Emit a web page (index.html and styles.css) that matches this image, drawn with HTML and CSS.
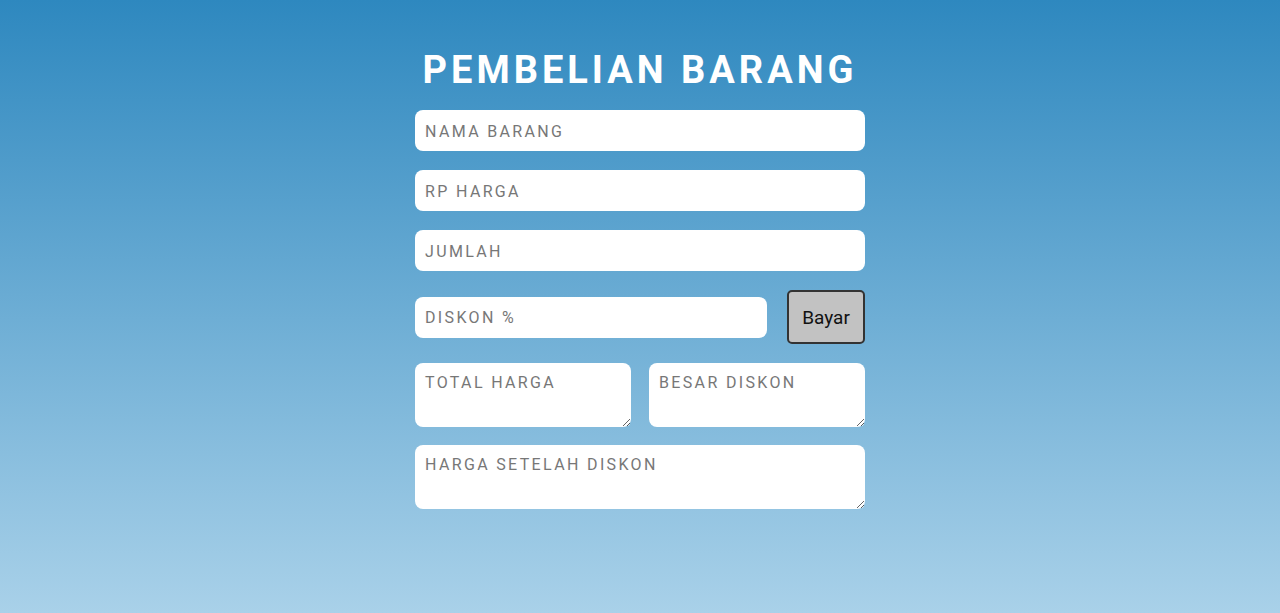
FILE: index.html
```html
<!DOCTYPE html>
<html>
<head>
<meta charset="utf-8">
<title>Pembelian Barang</title>
<link rel="stylesheet" href="styles.css">
</head>
<body>
<div class="wrap">
  <h1 class="title">PEMBELIAN BARANG</h1>
  <form class="form">
    <input class="field" type="text" placeholder="NAMA BARANG">
    <input class="field" type="text" placeholder="RP HARGA">
    <input class="field" type="text" placeholder="JUMLAH">
    <div class="row">
      <input class="field grow" type="text" placeholder="DISKON %">
      <button class="btn" type="button">Bayar</button>
    </div>
    <div class="row two">
      <textarea class="area" placeholder="TOTAL HARGA"></textarea>
      <textarea class="area" placeholder="BESAR DISKON"></textarea>
    </div>
    <textarea class="area last" placeholder="HARGA SETELAH DISKON"></textarea>
  </form>
</div>
</body>
</html>
```
FILE: styles.css
```css
html, body {
  margin: 0;
  padding: 0;
}
body {
  min-height: 613px;
  background: linear-gradient(to bottom, #2e88bf 0%, #a9d1e9 100%);
  font-family: Roboto, "Liberation Sans", sans-serif;
}
.wrap {
  width: 450px;
  margin: 0 auto;
  padding-top: 48px;
}
.title {
  margin: 0 0 18px 0;
  text-align: center;
  color: #fff;
  font-size: 38px;
  font-weight: 700;
  letter-spacing: 4px;
  line-height: 44px;
}
.form {
  display: flex;
  flex-direction: column;
  gap: 19px;
}
.field, .area {
  box-sizing: border-box;
  width: 100%;
  border: none;
  border-radius: 8px;
  background: #fff;
  font-family: Roboto, "Liberation Sans", sans-serif;
  font-size: 16px;
  letter-spacing: 2.35px;
  color: #333;
  padding: 1px 10px 0 10px;
  outline: none;
}
.field {
  height: 41px;
}
.area {
  height: 64px;
  padding: 10px 10px 8px 10px;
  resize: vertical;
  display: block;
}
.area.last {
  margin-top: -1px;
}
.field::placeholder, .area::placeholder {
  color: #777;
}
.row {
  display: flex;
  align-items: center;
  gap: 20px;
}
.row .grow {
  flex: 1;
  width: auto;
}
.row.two {
  gap: 18px;
}
.btn {
  width: 78px;
  height: 54px;
  background: #c2c2c2;
  border: 2px solid #333;
  border-radius: 5px;
  font-family: Roboto, "Liberation Sans", sans-serif;
  font-size: 19px;
  color: #111;
  padding: 0;
}
```
